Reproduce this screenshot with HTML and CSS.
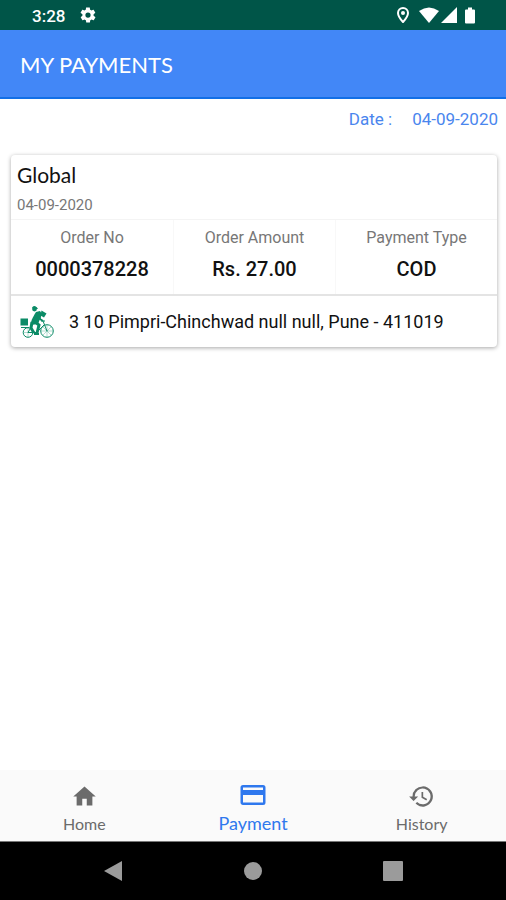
FILE: index.html
```html
<!DOCTYPE html>
<html lang="en">
<head>
<meta charset="utf-8">
<meta name="viewport" content="width=device-width, initial-scale=1">
<title>My Payments</title>
<link rel="stylesheet" href="styles.css">
</head>
<body>
<div class="status-bar">
  <span class="clock">3:28</span>
  <svg class="gear" viewBox="0 0 24 24" aria-hidden="true"><path d="M19.400 13c0-.3.1-.6.1-1s0-.7-.1-1l2.100-1.600c.2-.2.2-.4.1-.6l-2-3.500c-.1-.2-.4-.3-.6-.2l-2.500 1c-.5-.4-1.100-.7-1.700-1l-.4-2.600c0-.3-.2-.5-.5-.5h-4c-.3 0-.5.200-.5.400l-.4 2.700c-.6.200-1.100.6-1.700 1l-2.500-1c-.2-.1-.5 0-.6.200l-2 3.500c-.1.200 0 .5.100.6L4.600 11c0 .3-.1.700-.1 1s0 .7.100 1l-2.100 1.600c-.2.200-.3.400-.1.600l2 3.500c.1.200.4.300.6.200l2.500-1c.5.400 1.100.7 1.700 1l.4 2.600c0 .3.200.5.500.5h4c.3 0 .5-.2.500-.5l.4-2.600c.6-.2 1.200-.6 1.700-1l2.500 1c.2.100.5 0 .6-.2l2-3.500c.1-.2.100-.5-.1-.6zM12 15.500a3.500 3.500 0 1 1 0-7 3.500 3.500 0 0 1 0 7z"/></svg>
  <span class="indicators">
    <svg class="pin" viewBox="0 0 12 16" aria-hidden="true"><path d="M6 1a5 5 0 0 0-5 5c0 3.600 5 9 5 9s5-5.400 5-9a5 5 0 0 0-5-5z"/><circle cx="6" cy="6" r="2"/></svg>
    <svg class="wifi" viewBox="0 0 20 16" aria-hidden="true"><path d="M0 4Q10-3 20 4L10 16z"/></svg>
    <svg class="signal" viewBox="0 0 16 16" aria-hidden="true"><path d="M16 0v16H0z"/></svg>
    <svg class="battery" viewBox="0 0 10 16" aria-hidden="true"><path d="M3 0h4v2h2q1 0 1 1v12q0 1-1 1H1q-1 0-1-1V3q0-1 1-1h2z"/></svg>
  </span>
</div>
<header class="app-header"><h1>MY PAYMENTS</h1></header>
<main>
  <div class="date-filter"><span>Date :</span><time datetime="2020-09-04">04-09-2020</time></div>
  <article class="card">
    <div class="card-head">
      <h2>Global</h2>
      <time datetime="2020-09-04">04-09-2020</time>
    </div>
    <dl class="facts">
      <div class="fact"><dt>Order No</dt><dd>0000378228</dd></div>
      <div class="fact"><dt>Order Amount</dt><dd>Rs. 27.00</dd></div>
      <div class="fact"><dt>Payment Type</dt><dd>COD</dd></div>
    </dl>
    <div class="address">
      <svg class="bike" viewBox="0 0 34 34" aria-hidden="true">
        <g class="wheels"><circle cx="8" cy="27.500" r="4.800"/><circle cx="27" cy="26" r="6.300"/></g>
        <path class="spokes" d="M8 23v9M3.500 27.500h9M27 20v12M21 26h12M22.800 21.800l8.400 8.400M31.200 21.800l-8.400 8.400"/>
        <path class="frame" d="M8 27.500l4-7M1 22.500h8M27 26l-4-10M21 16h4M16 28l8-8M8 27.500h8"/>
        <path class="legs" d="M14 16l5 4-2 8M12 17l-1 6 3 5"/>
        <path class="arm" d="M19 9l1 5 3 2"/>
        <path d="M16 7l4-1 2 3-4 10-7 1c-1-3 2-8 5-13z"/>
        <path d="M21.500 5.500l5 3-2.500 4-3.500-2z"/>
        <circle cx="14.500" cy="4" r="2.400"/>
        <path d="M12 2.500q2-3 5 0l1 1.500h-3z"/>
        <path d="M.5 13.500H8v7H.5zM14 28h5v2h-5z"/>
      </svg>
      <span>3 10 Pimpri-Chinchwad null null, Pune - 411019</span>
    </div>
  </article>
</main>
<nav class="tabs" aria-label="Main">
  <a href="#home"><svg viewBox="0 0 24 24" aria-hidden="true"><path d="M10 20v-6h4v6h5v-8h3L12 3 2 12h3v8z"/></svg><span>Home</span></a>
  <a href="#payment" class="active" aria-current="page"><svg viewBox="0 0 24 24" aria-hidden="true"><path d="M20 4H4a2 2 0 0 0-2 2v12c0 1.100.9 2 2 2h16a2 2 0 0 0 2-2V6a2 2 0 0 0-2-2zm0 14H4v-6h16v6zm0-10H4V6h16v2z"/></svg><span>Payment</span></a>
  <a href="#history"><svg viewBox="0 0 24 24" aria-hidden="true"><path d="M13 3a9 9 0 0 0-9 9H1l3.900 3.900.1.100L9 12H6a7 7 0 1 1 2.100 4.900l-1.400 1.400A9 9 0 1 0 13 3zm-1 5v5l4.300 2.500.7-1.200-3.500-2.100V8z"/></svg><span>History</span></a>
</nav>
<div class="system-bar">
  <button type="button" aria-label="Back"><svg viewBox="0 0 20 20" aria-hidden="true"><path d="M19 0v20L1 10z"/></svg></button>
  <button type="button" aria-label="Home screen"><svg viewBox="0 0 20 20" aria-hidden="true"><circle cx="10" cy="10" r="9"/></svg></button>
  <button type="button" aria-label="Recent apps"><svg viewBox="0 0 20 20" aria-hidden="true"><rect width="20" height="20" rx="1"/></svg></button>
</div>
</body>
</html>
```
FILE: styles.css
```css
* {
  box-sizing: border-box;
}

body {
  margin: 0;
  min-height: 100vh;
  display: flex;
  flex-direction: column;
  background: #fff;
  color: #111;
  font-family: Roboto, sans-serif;
  font-size: 16px;
}

h1, h2, dl, dd {
  margin: 0;
}

svg {
  display: block;
  fill: currentColor;
}

.status-bar {
  display: flex;
  align-items: center;
  height: 30px;
  padding: 0 31px 0 32px;
  background: #005548;
  color: #fff;
}

.clock {
  font-size: 17px;
  font-weight: 500;
  line-height: 20px;
  padding-top: 2px;
}

.gear {
  width: 18px;
  height: 18px;
  margin-left: 14px;
}

.indicators {
  display: flex;
  align-items: center;
  margin-left: auto;
}

.pin {
  width: 12px;
  height: 16px;
  margin-right: 10px;
}

.pin path {
  fill: none;
  stroke: currentColor;
  stroke-width: 2;
}

.wifi {
  width: 20px;
  height: 16px;
  margin-right: 2px;
}

.signal {
  width: 16px;
  height: 16px;
  margin-right: 8px;
}

.battery {
  width: 10px;
  height: 17px;
}

.app-header {
  display: flex;
  align-items: center;
  height: 69px;
  padding: 2px 20px 0;
  border-bottom: 2px solid #126fe6;
  background: #4287f7;
  color: #fff;
}

.app-header h1 {
  font-family: Lato, sans-serif;
  font-size: 22px;
  font-weight: 400;
  line-height: 28px;
}

main {
  flex: 1;
}

.date-filter {
  display: flex;
  justify-content: flex-end;
  gap: 20px;
  padding: 10px 8px;
  color: #4a86ee;
  font-size: 17px;
  line-height: 20px;
}

.card {
  margin: 16px 9px 0 11px;
  border-radius: 4px;
  background: #fff;
  box-shadow: 0 1px 4px rgba(0, 0, 0, 0.35);
}

.card-head {
  padding: 8px 6px 4px;
  border-bottom: 1px solid #f4f4f4;
}

.card-head h2 {
  font-family: Lato, sans-serif;
  font-size: 21px;
  font-weight: 400;
  line-height: 24px;
}

.card-head time {
  display: block;
  margin-top: 8px;
  color: #777;
  font-size: 15px;
  line-height: 20px;
}

.facts {
  display: grid;
  grid-template-columns: repeat(3, 1fr);
  border-bottom: 2px solid #e4e4e4;
}

.fact {
  padding: 8px 0 14px;
  text-align: center;
}

.fact + .fact {
  border-left: 1px solid #f8f8f8;
}

.fact dt {
  color: #777;
  font-size: 16px;
  line-height: 20px;
}

.fact dd {
  margin-top: 10px;
  font-size: 20px;
  font-weight: 500;
  line-height: 22px;
}

.address {
  display: flex;
  align-items: center;
  gap: 15px;
  padding: 9px 9px 8px;
  font-size: 18px;
  line-height: 20px;
}

.bike {
  flex: none;
  width: 34px;
  height: 34px;
  color: #0b8b66;
}

.wheels,
.spokes,
.frame,
.legs,
.arm {
  fill: none;
  stroke: currentColor;
}

.spokes {
  stroke-width: 1;
  opacity: 0.3;
}

.legs {
  stroke-width: 3;
}

.arm {
  stroke-width: 2;
}

.tabs {
  display: grid;
  grid-template-columns: repeat(3, 1fr);
  height: 72px;
  border-bottom: 1px solid #777;
  background: #fafafa;
}

.tabs a {
  display: flex;
  flex-direction: column;
  align-items: center;
  padding-top: 13px;
  color: #6b6b6b;
  font-family: Lato, sans-serif;
  font-size: 16px;
  line-height: 20px;
  text-decoration: none;
}

.tabs svg {
  width: 27px;
  height: 27px;
  margin-bottom: 4px;
}

.tabs .active {
  padding-top: 10px;
  color: #2f78ee;
  font-size: 18px;
}

.tabs .active svg {
  width: 30px;
  height: 30px;
  margin-bottom: 3px;
}

.system-bar {
  display: flex;
  justify-content: center;
  align-items: center;
  gap: 120px;
  height: 58px;
  background: #000;
}

.system-bar button {
  padding: 0;
  border: 0;
  background: none;
  color: #9b9b9b;
}

.system-bar svg {
  width: 20px;
  height: 20px;
}
```
